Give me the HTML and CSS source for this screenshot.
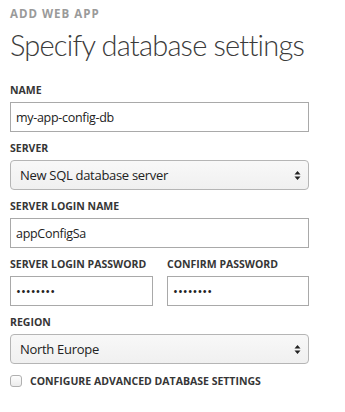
FILE: index.html
```html
<!DOCTYPE html>
<html lang="en">
<head>
  <meta charset="UTF-8">
  <title>Add Web App - Database Settings</title>
  <link rel="stylesheet" href="styles.css">
</head>
<body>
  <div class="wizard">
    <div class="eyebrow">ADD WEB APP</div>
    <h1>Specify database settings</h1>

    <div class="field">
      <label for="dbName">NAME</label>
      <input type="text" id="dbName" value="my-app-config-db">
    </div>

    <div class="field">
      <label for="server">SERVER</label>
      <div class="select">
        <span>New SQL database server</span>
        <svg width="7" height="11" viewBox="0 0 7 11"><path d="M3.5 1 L6.5 4.5 H0.5 Z M3.5 10 L6.5 6.5 H0.5 Z" fill="#222"/></svg>
      </div>
    </div>

    <div class="field">
      <label for="loginName">SERVER LOGIN NAME</label>
      <input type="text" id="loginName" value="appConfigSa">
    </div>

    <div class="pair">
      <div class="field">
        <label for="pw">SERVER LOGIN PASSWORD</label>
        <input type="password" id="pw" value="password">
      </div>
      <div class="field">
        <label for="pw2">CONFIRM PASSWORD</label>
        <input type="password" id="pw2" value="password">
      </div>
    </div>

    <div class="field">
      <label for="region">REGION</label>
      <div class="select">
        <span>North Europe</span>
        <svg width="7" height="11" viewBox="0 0 7 11"><path d="M3.5 1 L6.5 4.5 H0.5 Z M3.5 10 L6.5 6.5 H0.5 Z" fill="#222"/></svg>
      </div>
    </div>

    <div class="check">
      <span class="box"></span>
      <span>CONFIGURE ADVANCED DATABASE SETTINGS</span>
    </div>
  </div>
</body>
</html>
```

FILE: styles.css
```css
/* Reset & base */
* { box-sizing: border-box; margin: 0; padding: 0; }
body { font-family: 'Open Sans', 'Noto Sans', sans-serif; background: #ffffff; color: #333333; }

.wizard { width: 309px; padding: 7px 0 0 10px; }
.eyebrow { font-size: 11.5px; font-weight: 700; color: #9a9a9a; line-height: 14px; letter-spacing: 1px; }
h1 { font-family: Lato, 'Open Sans', sans-serif; font-size: 29px; font-weight: 300; color: #3b3b3b; line-height: 40px; margin: 4px 0 19px; white-space: nowrap; letter-spacing: -0.8px; }

/* Fields */
.field { display: flex; flex-direction: column; margin-bottom: 10px; }
.field label { font-size: 10.5px; font-weight: 700; color: #363636; line-height: 12px; margin-bottom: 6px; white-space: nowrap; }
.field input { width: 100%; height: 30px; border: 1px solid #a9a9a9; padding: 0 5px; font: 12.5px 'Open Sans', sans-serif; letter-spacing: -0.3px; color: #222; background: #fff; }
.field input[type=password] { letter-spacing: 0; font-size: 13px; }

.select { height: 30px; border: 1px solid #b5b5b5; border-radius: 4px; background: linear-gradient(#f8f8f8, #f0f0f0); display: flex; align-items: center; justify-content: space-between; padding: 0 7px 0 9px; font-size: 13px; letter-spacing: -0.3px; color: #222; }

.pair { display: grid; grid-template-columns: 143px 142px; gap: 14px; }

/* Checkbox */
.check { display: flex; align-items: center; gap: 8px; margin-top: 6px; font-size: 10.5px; font-weight: 700; color: #363636; }
.check .box { width: 12px; height: 12px; border: 1px solid #b0b0b0; border-radius: 3px; background: linear-gradient(#fdfdfd, #ececec); }
```
